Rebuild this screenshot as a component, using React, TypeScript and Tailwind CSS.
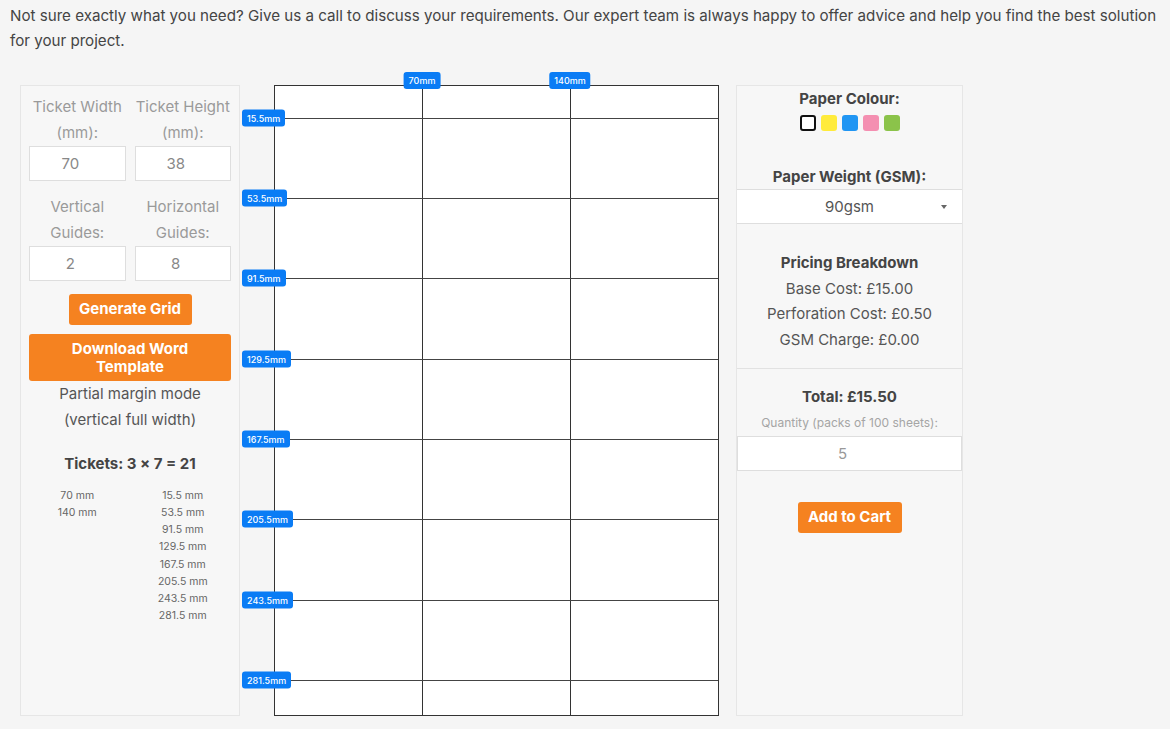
import React from 'react';

const MM = 444 / 210;

const vGuides = [70, 140];
const hGuides = [15.5, 53.5, 91.5, 129.5, 167.5, 205.5, 243.5, 281.5];

const swatches = [
  { name: 'White', cls: 'bg-white border-2 border-[#111]' },
  { name: 'Yellow', cls: 'bg-[#ffeb3b]' },
  { name: 'Blue', cls: 'bg-[#2196f3]' },
  { name: 'Pink', cls: 'bg-[#f48fb1]' },
  { name: 'Green', cls: 'bg-[#8bc34a]' },
];

const Field: React.FC<{ label: string[]; value: string }> = ({ label, value }) => (
  <div className="flex flex-col">
    <label className="text-center text-[15px] leading-[26px] text-[#9a9a9a]">
      {label.map((l) => (
        <div key={l}>{l}</div>
      ))}
    </label>
    <input
      readOnly
      value={value}
      className="h-[35px] w-full border border-[#dedede] bg-white pr-[14px] text-center text-[15px] text-[#888] outline-none"
    />
  </div>
);

export default function App() {
  return (
    <div className="min-h-screen bg-[#f5f5f5] font-['Inter',sans-serif] text-[#444]">
      {/* Intro */}
      <p className="px-[10px] pt-[3px] text-[15.15px] leading-[25px] text-[#444]">
        Not sure exactly what you need? Give us a call to discuss your requirements. Our expert team is always happy to
        offer advice and help you find the best solution for your project.
      </p>

      <div className="mt-[32px] ml-[20px] flex items-start">
        {/* Left controls */}
        <aside className="h-[631px] w-[220px] border border-[#e6e6e6] bg-[#f7f7f7] px-[8px] pt-[8px]">
          <div className="grid grid-cols-2 gap-x-[9px]">
            <Field label={['Ticket Width', '(mm):']} value="70" />
            <Field label={['Ticket Height', '(mm):']} value="38" />
          </div>
          <div className="mt-[13px] grid grid-cols-2 gap-x-[9px]">
            <Field label={['Vertical', 'Guides:']} value="2" />
            <Field label={['Horizontal', 'Guides:']} value="8" />
          </div>

          <div className="mt-[13px] flex justify-center">
            <button className="h-[31px] w-[123px] rounded-[3px] bg-[#f58220] text-[15px] font-bold text-white">
              Generate Grid
            </button>
          </div>
          <button className="mt-[9px] h-[47px] w-full rounded-[3px] bg-[#f58220] text-[15px] font-bold leading-[18px] text-white">
            Download Word
            <br />
            Template
          </button>

          <p className="text-center text-[15px] leading-[26px] text-[#555]">
            Partial margin mode
            <br />
            (vertical full width)
          </p>

          <h3 className="mt-[18px] text-center text-[15px] font-bold leading-[26px] text-[#444]">Tickets: 3 × 7 = 21</h3>

          <div className="mt-[10px] grid grid-cols-2 gap-x-[9px] text-[10.5px] leading-[17.15px] text-[#666]">
            <ul className="text-center">
              {vGuides.map((v) => (
                <li key={v}>{v} mm</li>
              ))}
            </ul>
            <ul className="text-center">
              {hGuides.map((h) => (
                <li key={h}>{h} mm</li>
              ))}
            </ul>
          </div>
        </aside>

        {/* Paper preview */}
        <div className="relative ml-[34px] h-[631px] w-[445px] border-[1.5px] border-[#333] bg-white">
          {vGuides.map((v) => (
            <React.Fragment key={v}>
              <div className="absolute top-0 bottom-0 w-px bg-[#333]" style={{ left: v * MM - 1 }} />
              <span
                className="absolute top-[-14px] -translate-x-1/2 rounded-[3px] bg-[#0a7cf5] px-[5px] text-[9px] font-medium leading-[17px] text-white"
                style={{ left: v * MM - 1 }}
              >
                {v}mm
              </span>
            </React.Fragment>
          ))}
          {hGuides.map((h) => (
            <React.Fragment key={h}>
              <div className="absolute left-0 right-0 h-px bg-[#444]" style={{ top: h * MM - 1 }} />
              <span
                className="absolute left-[-33px] -translate-y-1/2 rounded-[3px] bg-[#0a7cf5] px-[5px] text-[9px] font-medium leading-[17px] text-white"
                style={{ top: h * MM - 1 }}
              >
                {h}mm
              </span>
            </React.Fragment>
          ))}
        </div>

        {/* Options & pricing */}
        <aside className="ml-[17px] flex h-[631px] w-[227px] flex-col border border-[#e6e6e6] bg-[#f7f7f7] text-center">
          <h4 className="pt-[1px] text-[15px] font-bold leading-[24px] text-[#444]">Paper Colour:</h4>
          <div className="mt-[4px] flex justify-center gap-[5px]">
            {swatches.map((s) => (
              <span key={s.name} title={s.name} className={`h-[16px] w-[16px] rounded-[3px] ${s.cls}`} />
            ))}
          </div>

          <h4 className="mt-[34px] text-[15px] font-bold leading-[24px] text-[#444]">Paper Weight (GSM):</h4>
          <div className="relative h-[35px] border-y border-[#dedede] bg-white">
            <span className="block text-[15px] leading-[33px] text-[#555]">90gsm</span>
            <span className="absolute right-[15px] top-[15px] h-0 w-0 border-x-[3.5px] border-t-[4px] border-x-transparent border-t-[#666]" />
          </div>

          <div className="border-b border-[#e2e2e2] pt-[26px] pb-[15px] text-[15px] leading-[25.7px] text-[#555]">
            <div className="font-bold text-[#444]">Pricing Breakdown</div>
            <div>Base Cost: £15.00</div>
            <div>Perforation Cost: £0.50</div>
            <div>GSM Charge: £0.00</div>
          </div>

          <div className="pt-[15px] text-[15px] font-bold leading-[26px] text-[#444]">Total: £15.50</div>
          <div className="text-[12px] leading-[26px] text-[#a5a5a5]">Quantity (packs of 100 sheets):</div>
          <input
            readOnly
            value="5"
            className="h-[35px] w-full border border-[#dedede] bg-white pr-[14px] text-center text-[15px] text-[#999] outline-none"
          />
          <div className="mt-[31px] flex justify-center">
            <button className="h-[31px] w-[104px] rounded-[3px] bg-[#f58220] text-[15px] font-bold text-white">
              Add to Cart
            </button>
          </div>
        </aside>
      </div>
    </div>
  );
}
